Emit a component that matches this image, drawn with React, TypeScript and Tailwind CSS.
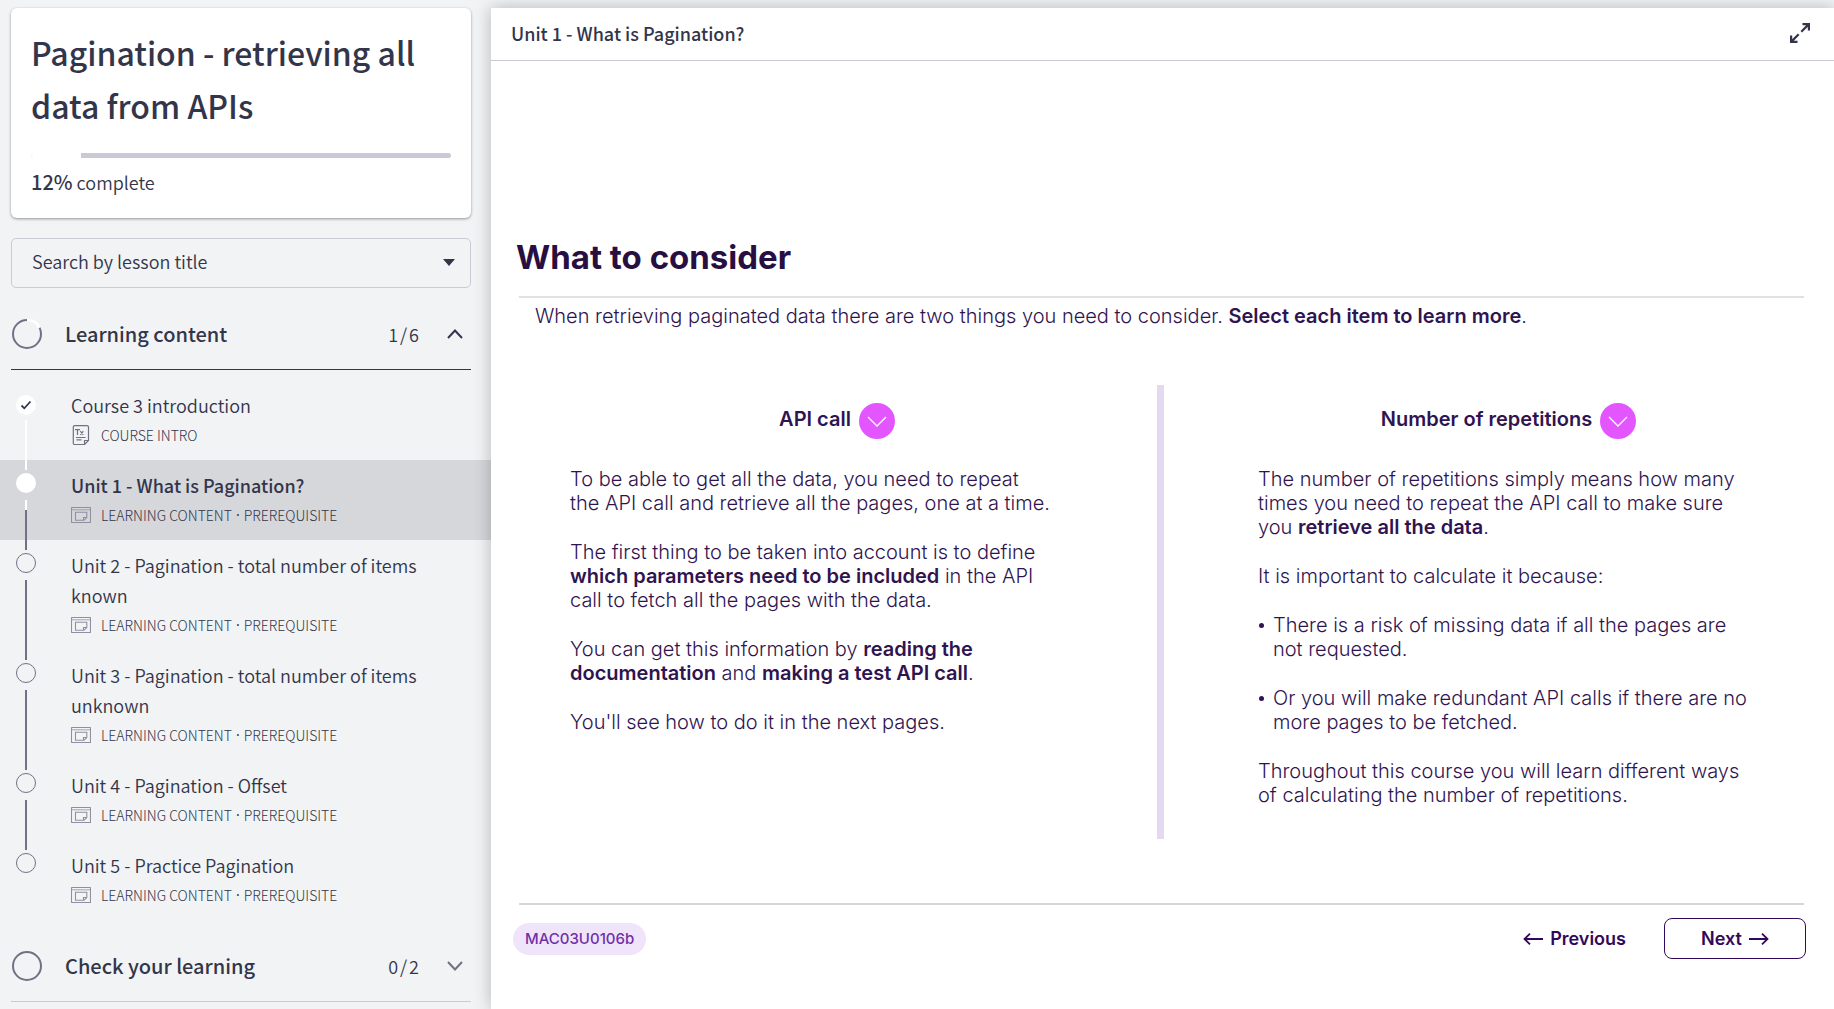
import React from "react";

const sidebarFont = "font-['Noto_Sans_CJK_SC','Noto_Sans',sans-serif]";

type Lesson = { title: string; meta: string[]; kind: "text" | "slide"; state: "done" | "current" | "todo" };

const required = ["LEARNING CONTENT", "PREREQUISITE"];

const lessons: Lesson[] = [
  { title: "Course 3 introduction", meta: ["COURSE INTRO"], kind: "text", state: "done" },
  { title: "Unit 1 - What is Pagination?", meta: required, kind: "slide", state: "current" },
  { title: "Unit 2 - Pagination - total number of items known", meta: required, kind: "slide", state: "todo" },
  { title: "Unit 3 - Pagination - total number of items unknown", meta: required, kind: "slide", state: "todo" },
  { title: "Unit 4 - Pagination - Offset", meta: required, kind: "slide", state: "todo" },
  { title: "Unit 5 - Practice Pagination", meta: required, kind: "slide", state: "todo" },
];

function TextIcon() {
  return (
    <svg viewBox="0 0 20 20" className="h-5 w-5" fill="none" stroke="#6f7285" strokeWidth="1.200">
      <path d="M3.500 .6h12.500a1.500 1.500 0 0 1 1.500 1.500v13.400l-4 4H3.500a1.200 1.200 0 0 1-1.200-1.200V1.800A1.200 1.200 0 0 1 3.500 .6z" />
      <path d="M13.500 19.500v-4h4M5 12.500h9.500M5.500 14.800h5M4 4.600h5M6.500 4.600v5.400M9.300 6.200l3 3.800M12.300 6.200l-3 3.800" />
    </svg>
  );
}

function SlideIcon() {
  return (
    <svg viewBox="0 0 20 16" className="h-4 w-5" fill="none" stroke="#8d90a1" strokeWidth="1.100">
      <rect x=".5" y=".5" width="19" height="15" rx=".5" />
      <path d="M.5 2.800h19" strokeWidth=".8" />
      <path d="M4.500 5.200h11.300v5.300l-2.800 2.800H4.500zM12.500 13.300v-2.800h3.300" />
    </svg>
  );
}

function Ring({ progress }: { progress: boolean }) {
  return (
    <svg viewBox="0 0 30 30" className="h-[30px] w-[30px] shrink-0" fill="none" strokeWidth="2">
      <circle cx="15" cy="15" r="14" stroke="#6f7285" />
      {progress && <path d="M15 1A14 14 0 0 1 27.500 8.700" stroke="#ffffff" strokeWidth="3" />}
    </svg>
  );
}

function Chevron({ up }: { up: boolean }) {
  return (
    <svg viewBox="0 0 16 10" className="h-[10px] w-4" fill="none" stroke={up ? "#33354a" : "#6f7285"} strokeWidth="2">
      {up ? <path d="M1 9l7-7.500L15 9" /> : <path d="M1 1l7 7.500L15 1" />}
    </svg>
  );
}

function SectionHeader({ title, done, total, open }: { title: string; done: number; total: number; open: boolean }) {
  return (
    <button
      type="button"
      aria-expanded={open}
      className={`mr-5 ml-[11px] flex h-[71px] items-center border-b pr-2 pl-px text-left text-[#33354a] ${open ? "border-[#33354a]" : "border-[#c9cad6]"}`}
    >
      <Ring progress={open} />
      <span className="ml-[23px] flex-1 text-[20px] leading-8 font-medium">{title}</span>
      <span className="mr-7 flex gap-[2px] text-[18px] leading-8 font-[350]">
        <span>{done}</span>
        <span>/</span>
        <span>{total}</span>
      </span>
      <Chevron up={open} />
    </button>
  );
}

function Rail({ state, last }: { state: Lesson["state"]; last: boolean }) {
  return (
    <span className="-mb-5 flex w-5 shrink-0 flex-col items-center">
      {state === "done" && (
        <span className="mt-[5px] flex h-5 w-5 items-center justify-center rounded-full bg-white">
          <svg viewBox="0 0 12 10" className="h-[10px] w-3" fill="none" stroke="#33354a" strokeWidth="1.800">
            <path d="M1.500 5.500l2.800 2.800L10.500 1.500" />
          </svg>
        </span>
      )}
      {state === "current" && <span className="mt-[3px] h-5 w-5 rounded-full bg-white" />}
      {state === "todo" && <span className="mt-[3px] h-5 w-5 rounded-full border border-[#6f7285]" />}
      {!last && state === "done" && <span className="mt-[5px] w-[2px] flex-1 bg-white" />}
      {!last && state === "current" && (
        <>
          <span className="mt-[7px] h-[10px] w-[2px] bg-white" />
          <span className="w-[2px] flex-1 bg-[#6f7285]" />
        </>
      )}
      {!last && state === "todo" && <span className="mt-[7px] w-[2px] flex-1 bg-[#6f7285]" />}
    </span>
  );
}

function LessonRow({ lesson, last }: { lesson: Lesson; last: boolean }) {
  const current = lesson.state === "current";
  return (
    <li>
      <a href="#lesson" className={`flex py-[10px] pr-10 pl-4 ${current ? "bg-[#d6d7db]" : ""}`}>
        <Rail state={lesson.state} last={last} />
        <span className="ml-[35px] flex-1">
          <span className={`block text-[18px] leading-[30px] ${current ? "font-medium" : "font-[350]"}`}>{lesson.title}</span>
          <span className="flex h-[30px] items-center gap-[10px]">
            {lesson.kind === "text" ? <TextIcon /> : <SlideIcon />}
            <span className="flex gap-1 text-[14px] leading-5 font-light whitespace-nowrap">
              {lesson.meta.map((part, i) => (
                <React.Fragment key={part}>
                  {i > 0 && <span className="font-['Noto_Sans',sans-serif] font-normal">·</span>}
                  <span>{part}</span>
                </React.Fragment>
              ))}
            </span>
          </span>
        </span>
      </a>
    </li>
  );
}

function Sidebar() {
  return (
    <aside className={`flex w-[491px] shrink-0 flex-col pt-2 text-[#33354a] ${sidebarFont}`}>
      <section className="mr-5 ml-[11px] rounded-md bg-white px-5 pt-[18px] pb-5 shadow-[0_1px_3px_rgba(0,0,0,0.4)]">
        <h1 className="text-[32px] leading-[53px] font-medium">Pagination - retrieving all data from APIs</h1>
        <div role="progressbar" aria-label="Course progress" aria-valuenow={12} className="mt-[21px] flex h-[5px] overflow-hidden rounded-full bg-[#c9cad6]">
          <div className="w-[12%] bg-white" />
        </div>
        <p className="mt-2 text-[18px] leading-8 font-[350]">
          <span className="text-[20px] font-medium">12%</span> complete
        </p>
      </section>

      <div className="relative mt-5 mr-5 ml-[11px]">
        <select aria-label="Search by lesson title" className="h-[50px] w-full appearance-none rounded-[5px] border border-[#c9cad6] bg-transparent px-5 pb-1 text-[18px] font-[350]">
          <option>Search by lesson title</option>
        </select>
        <svg viewBox="0 0 12 7" className="pointer-events-none absolute top-[21px] right-4 h-[7px] w-3">
          <path d="M0 0h12L6 7z" fill="#33354a" />
        </svg>
      </div>

      <nav aria-label="Lessons" className="mt-[11px] flex flex-col">
        <SectionHeader title="Learning content" done={1} total={6} open />
        <ul className="pt-[10px] pb-[11px]">
          {lessons.map((l, i) => (
            <LessonRow key={l.title} lesson={l} last={i === lessons.length - 1} />
          ))}
        </ul>
        <SectionHeader title="Check your learning" done={0} total={2} open={false} />
      </nav>
    </aside>
  );
}

function TopicToggle({ label }: { label: string }) {
  return (
    <button type="button" className="mx-auto flex items-center gap-2 text-[20px] leading-6 font-semibold">
      <span className="pb-1">{label}</span>
      <span className="flex h-9 w-9 items-center justify-center rounded-full bg-[#e255ff]">
        <svg viewBox="0 0 20 11" className="h-[11px] w-5" fill="none" stroke="#ffffff" strokeWidth="1.300">
          <path d="M1 1l9 9 9-9" />
        </svg>
      </span>
    </button>
  );
}

function B({ children }: { children: React.ReactNode }) {
  return <strong className="font-semibold">{children}</strong>;
}

function Bullet() {
  return <span className="mt-[10px] mr-[9px] ml-[1px] h-[5px] w-[5px] shrink-0 rounded-full bg-[#2f1450]" />;
}

export default function App() {
  return (
    <div className="flex min-h-screen overflow-hidden bg-[#f1f3f5]">
      <Sidebar />
      <main className="z-10 mt-2 flex min-w-0 flex-1 flex-col bg-white font-['Inter',sans-serif] text-[#2f1450] shadow-[0_0_16px_rgba(0,0,0,0.25)]">
        <header className={`flex h-[53px] items-center justify-between border-b border-[#c9cad6] pr-6 pl-5 text-[#33354a] ${sidebarFont}`}>
          <h2 className="pb-[2px] text-[18px] leading-8 font-medium">Unit 1 - What is Pagination?</h2>
          <button type="button" aria-label="Full screen" className="pb-[2px]">
            <svg viewBox="0 0 20 20" className="h-5 w-5" fill="none" stroke="#33354a" strokeWidth="2.200">
              <path d="M12.500 1.100h6.400v6.400M18.900 1.100l-7.600 7.600M7.500 18.900H1.100v-6.400M1.100 18.900l7.600-7.600" />
            </svg>
          </button>
        </header>

        <article className="flex flex-col pt-[172px] pr-[30px] pl-[25px]">
          <h1 className="text-[33px] leading-[48px] font-bold text-[#280f42]">What to consider</h1>
          <div className="mt-[15px] ml-[3px] h-[2px] bg-[#e4dfe3]" />
          <p className="mt-[6px] pl-[19px] text-[20px] leading-6 font-light">
            When retrieving paginated data there are two things you need to consider. <B>Select each item to learn more</B>.
          </p>

          <div className="mt-[57px] ml-px grid grid-cols-[1fr_7px_1fr]">
            <section className="flex flex-col px-[53px] pt-[18px]">
              <TopicToggle label="API call" />
              <div className="mt-7 flex flex-col gap-[25px] text-[20px] leading-6 font-light whitespace-nowrap">
                <p>
                  To be able to get all the data, you need to repeat
                  <br />
                  the API call and retrieve all the pages, one at a time.
                </p>
                <p>
                  The first thing to be taken into account is to define
                  <br />
                  <B>which parameters need to be included</B> in the API
                  <br />
                  call to fetch all the pages with the data.
                </p>
                <p>
                  You can get this information by <B>reading the</B>
                  <br />
                  <B>documentation</B> and <B>making a test API call</B>.
                </p>
                <p>You'll see how to do it in the next pages.</p>
              </div>
            </section>

            <div className="bg-[#e5d9f2]" />

            <section className="flex flex-col pt-[18px] pr-[45px] pb-8 pl-[94px]">
              <TopicToggle label="Number of repetitions" />
              <div className="mt-7 flex flex-col gap-[25px] text-[20px] leading-6 font-light whitespace-nowrap">
                <p>
                  The number of repetitions simply means how many
                  <br />
                  times you need to repeat the API call to make sure
                  <br />
                  you <B>retrieve all the data</B>.
                </p>
                <p>It is important to calculate it because:</p>
                <ul className="flex flex-col gap-[25px]">
                  <li className="flex">
                    <Bullet />
                    <span>
                      There is a risk of missing data if all the pages are
                      <br />
                      not requested.
                    </span>
                  </li>
                  <li className="flex">
                    <Bullet />
                    <span>
                      Or you will make redundant API calls if there are no
                      <br />
                      more pages to be fetched.
                    </span>
                  </li>
                </ul>
                <p>
                  Throughout this course you will learn different ways
                  <br />
                  of calculating the number of repetitions.
                </p>
              </div>
            </section>
          </div>
        </article>

        <footer className="mt-16 pr-7 pl-[22px]">
          <div className="mr-[2px] ml-[6px] h-[2px] bg-[#d9d4d6]" />
          <div className="mt-[13px] flex items-center">
            <span className="flex h-8 items-center rounded-full bg-[#f0e4fb] px-3 text-[15px] leading-5 font-medium text-[#7130a8]">MAC03U0106b</span>
            <div className="ml-auto flex items-center gap-[38px] text-[18px] leading-6 font-semibold text-[#32085c]">
              <button type="button" className="flex items-center gap-[7px]">
                <svg viewBox="0 0 20 12" className="h-3 w-5" fill="none" stroke="currentColor" strokeWidth="1.800">
                  <path d="M20 6H1.500M7 .7L1.500 6 7 11.300" />
                </svg>
                Previous
              </button>
              <button type="button" className="flex h-[41px] w-[142px] items-center justify-center gap-[7px] rounded-lg border border-[#32085c]">
                Next
                <svg viewBox="0 0 20 12" className="h-3 w-5" fill="none" stroke="currentColor" strokeWidth="1.800">
                  <path d="M0 6h18.500M13 .7L18.500 6 13 11.300" />
                </svg>
              </button>
            </div>
          </div>
        </footer>
      </main>
    </div>
  );
}
